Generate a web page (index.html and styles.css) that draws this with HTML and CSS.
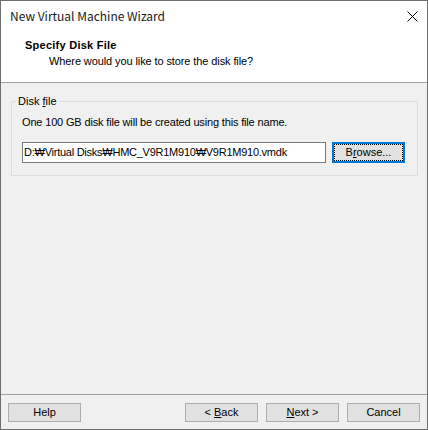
FILE: index.html
```html
<!DOCTYPE html>
<html lang="en">
<head>
<meta charset="utf-8">
<title>New Virtual Machine Wizard</title>
<link rel="stylesheet" href="styles.css">
</head>
<body>
<div class="window">
  <div class="header">
    <div class="titlebar">
      <span class="title">New Virtual Machine Wizard</span>
      <svg class="close" width="11" height="11" viewBox="0 0 11 11" aria-hidden="true">
        <path d="M0.5 0.5 L10.5 10.5 M10.5 0.5 L0.5 10.5" stroke="#000" stroke-width="1" fill="none"/>
      </svg>
    </div>
    <div class="heading">
      <div class="heading-title">Specify Disk File</div>
      <div class="heading-sub">Where would you like to store the disk file?</div>
    </div>
  </div>
  <div class="content">
    <fieldset class="group">
      <legend class="group-label">Disk <u>f</u>ile</legend>
      <div class="group-text">One 100 GB disk file will be created using this file name.</div>
      <div class="file-row">
        <div class="file-input">D:₩Virtual Disks₩HMC_V9R1M910₩V9R1M910.vmdk</div>
        <button class="btn btn-focus"><span class="focus-ring">B<u>r</u>owse...</span></button>
      </div>
    </fieldset>
  </div>
  <div class="footer">
    <button class="btn">Help</button>
    <div class="nav">
      <button class="btn">&lt; <u>B</u>ack</button>
      <button class="btn"><u>N</u>ext &gt;</button>
      <button class="btn">Cancel</button>
    </div>
  </div>
</div>
</body>
</html>
```
FILE: styles.css
```css
* { box-sizing: border-box; }
html, body { margin: 0; padding: 0; background: #f0f0f0; }
body {
  font-family: "Liberation Sans", Arial, sans-serif;
  font-size: 11px;
  color: #000;
}
.window {
  width: 428px;
  height: 430px;
  border: 1px solid #6e6e6e;
  display: flex;
  flex-direction: column;
  background: #f0f0f0;
}
.header {
  background: #fff;
  border-bottom: 1px solid #a0a0a0;
}
.titlebar {
  height: 30px;
  display: flex;
  align-items: center;
  justify-content: space-between;
  padding: 0 9px 0 9px;
}
.title {
  font-family: "Noto Sans CJK KR", "Noto Sans", sans-serif;
  font-size: 12px;
  line-height: 16px;
  color: #1a1a1a;
}
.close { display: block; }
.heading {
  height: 51px;
  padding: 6px 0 0 24px;
  line-height: 16px;
}
.heading-title { font-weight: bold; letter-spacing: 0.25px; }
.heading-sub { padding-left: 24px; letter-spacing: -0.1px; }
.content {
  flex: 1;
  padding: 10px 9px 0 10px;
}
.group {
  margin: 0;
  border: 1px solid #dcdcdc;
  padding: 5px 10px 12px 10px;
}
.group-label {
  line-height: 16px;
  padding: 0 2px;
  margin-left: -6px;
}
.group-text { line-height: 16px; letter-spacing: -0.16px; }
.file-row {
  display: flex;
  gap: 6px;
  margin-top: 12px;
}
.file-input {
  width: 304px;
  height: 21px;
  border: 1px solid #7a7a7a;
  background: #fff;
  line-height: 19px;
  padding-left: 1px;
  white-space: nowrap;
  overflow: hidden;
  letter-spacing: -0.25px;
}
.btn {
  width: 73px;
  height: 19px;
  border: 1px solid #adadad;
  background: #e1e1e1;
  font: inherit;
  color: #000;
  padding: 0;
  line-height: 17px;
  text-align: center;
}
.btn-focus {
  height: 21px;
  border: 2px solid #0078d7;
  display: flex;
}
.focus-ring {
  flex: 1;
  border: 1px dotted #000;
  line-height: 15px;
}
.footer {
  border-top: 1px solid #a0a0a0;
  height: 35px;
  display: flex;
  justify-content: space-between;
  padding: 8px 7px 0 7px;
}
.nav { display: flex; gap: 8px; }
```
